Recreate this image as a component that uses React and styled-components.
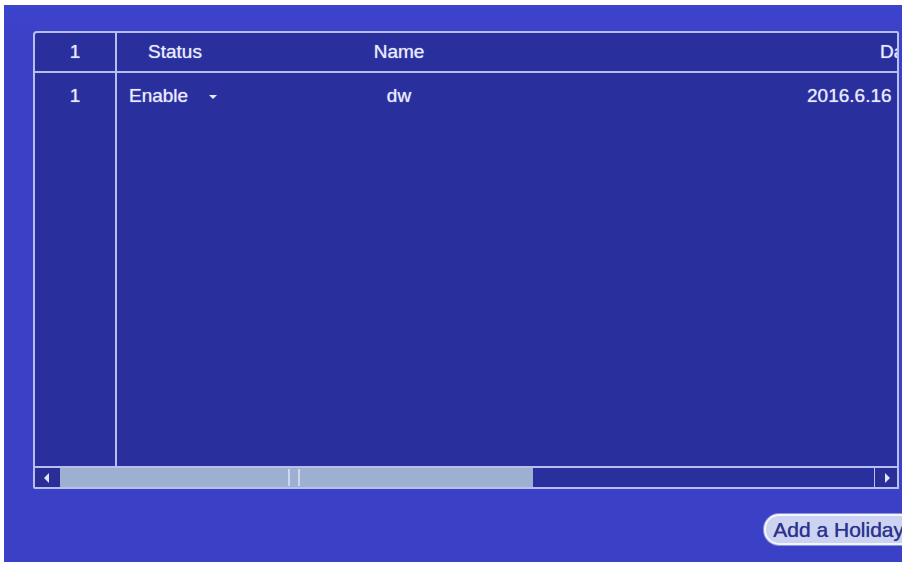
import React from 'react';
import styled, { createGlobalStyle } from 'styled-components';

const Global = createGlobalStyle`
  html, body {
    margin: 0;
    padding: 0;
    background: #ffffff;
  }
  body {
    font-family: "Liberation Sans", Arial, sans-serif;
  }
`;

const LINE = '#b6bff0';
const TABLE_BG = '#2a2f9e';

const Frame = styled.div`
  margin: 5px 4px 0 4px;
  width: 898px;
  height: 557px;
  background: linear-gradient(to bottom, #3d44cc 0%, #3a41c6 8%, #3a41c6 100%);
  overflow: hidden;
  display: flex;
  flex-direction: column;
  padding: 26px 0 0 29px;
  box-sizing: border-box;
`;

const Panel = styled.div`
  width: 866px;
  height: 458px;
  box-sizing: border-box;
  border: 2px solid ${LINE};
  border-radius: 4px 2px 0 2px;
  background: ${TABLE_BG};
  display: flex;
  flex-direction: column;
  overflow: hidden;
`;

const cols = '80px 120px 328px 674px';
const divider = `linear-gradient(to right, transparent 80px, ${LINE} 80px, ${LINE} 82px, transparent 82px)`;

const HeaderRow = styled.div`
  display: grid;
  grid-template-columns: ${cols};
  height: 38px;
  border-bottom: 2px solid ${LINE};
  background: ${divider};
  flex-shrink: 0;
`;

const Body = styled.div`
  flex: 1;
  display: grid;
  grid-template-columns: ${cols};
  grid-auto-rows: 44px;
  align-content: start;
  background: ${divider};
`;

const Cell = styled.div`
  display: flex;
  align-items: center;
  justify-content: ${p => (p.$left ? 'flex-start' : 'center')};
  padding-left: ${p => p.$pad || 0}px;
  padding-top: ${p => p.$top || 0}px;
  color: #e7ebff;
  font-size: 19px;
  white-space: nowrap;
  text-shadow: 0 0 1px rgba(231, 235, 255, 0.8);
`;

const Caret = styled.span`
  display: inline-block;
  margin-left: 21px;
  margin-top: 2px;
  width: 0;
  height: 0;
  border-left: 4px solid transparent;
  border-right: 4px solid transparent;
  border-top: 4px solid #e7ebff;
`;

const ScrollBar = styled.div`
  height: 19px;
  flex-shrink: 0;
  border-top: 2px solid ${LINE};
  display: flex;
  background: ${TABLE_BG};
`;

const ArrowBtn = styled.div`
  width: ${p => p.$w}px;
  flex-shrink: 0;
  display: flex;
  align-items: center;
  justify-content: center;
  box-sizing: border-box;
  border-left: ${p => (p.$sep ? `1px solid ${LINE}` : 'none')};
  background: #2a2e96;
`;

const Tri = styled.span`
  width: 0;
  height: 0;
  border-top: 5px solid transparent;
  border-bottom: 5px solid transparent;
  ${p => (p.$dir === 'left'
    ? 'border-right: 5px solid #dfe5ff; margin-left: -2px;'
    : 'border-left: 5px solid #dfe5ff; margin-left: 2px;')}
`;

const Thumb = styled.div`
  width: 473px;
  flex-shrink: 0;
  background: #9eb0d1;
  display: flex;
  justify-content: center;
  align-items: stretch;
  gap: 8px;
  padding: 1px 6px 1px 0;
  box-sizing: border-box;
`;

const Grip = styled.span`
  width: 2px;
  background: #cdd8ee;
`;

const Track = styled.div`
  flex: 1;
`;

const Footer = styled.div`
  display: flex;
  justify-content: flex-end;
  margin-top: 25px;
  margin-right: -18px;
`;

const Button = styled.button`
  height: 31px;
  padding: 0 14px 0 7px;
  border: 2px solid #f4f6ff;
  border-radius: 15px;
  background: #ccd2f1;
  color: #2c3290;
  font-family: "Liberation Sans", Arial, sans-serif;
  font-size: 21px;
  line-height: 1;
  text-shadow: 0 0 1px #2c3290, 0 0 2px #ffffff;
  box-shadow: 0 0 0 1px #8d94d8;
`;

export default function App() {
  return (
    <>
      <Global />
      <Frame>
        <Panel>
          <HeaderRow>
            <Cell>1</Cell>
            <Cell>Status</Cell>
            <Cell>Name</Cell>
            <Cell>Date</Cell>
          </HeaderRow>
          <Body>
            <Cell $top={2}>1</Cell>
            <Cell $left $pad={14} $top={2}>
              Enable<Caret />
            </Cell>
            <Cell $top={2}>dw</Cell>
            <Cell $top={2}>2016.6.16 - 2016.6.16</Cell>
          </Body>
          <ScrollBar>
            <ArrowBtn $w={25}>
              <Tri $dir="left" />
            </ArrowBtn>
            <Thumb>
              <Grip />
              <Grip />
            </Thumb>
            <Track />
            <ArrowBtn $w={23} $sep>
              <Tri $dir="right" />
            </ArrowBtn>
          </ScrollBar>
        </Panel>
        <Footer>
          <Button>Add a Holiday</Button>
        </Footer>
      </Frame>
    </>
  );
}
